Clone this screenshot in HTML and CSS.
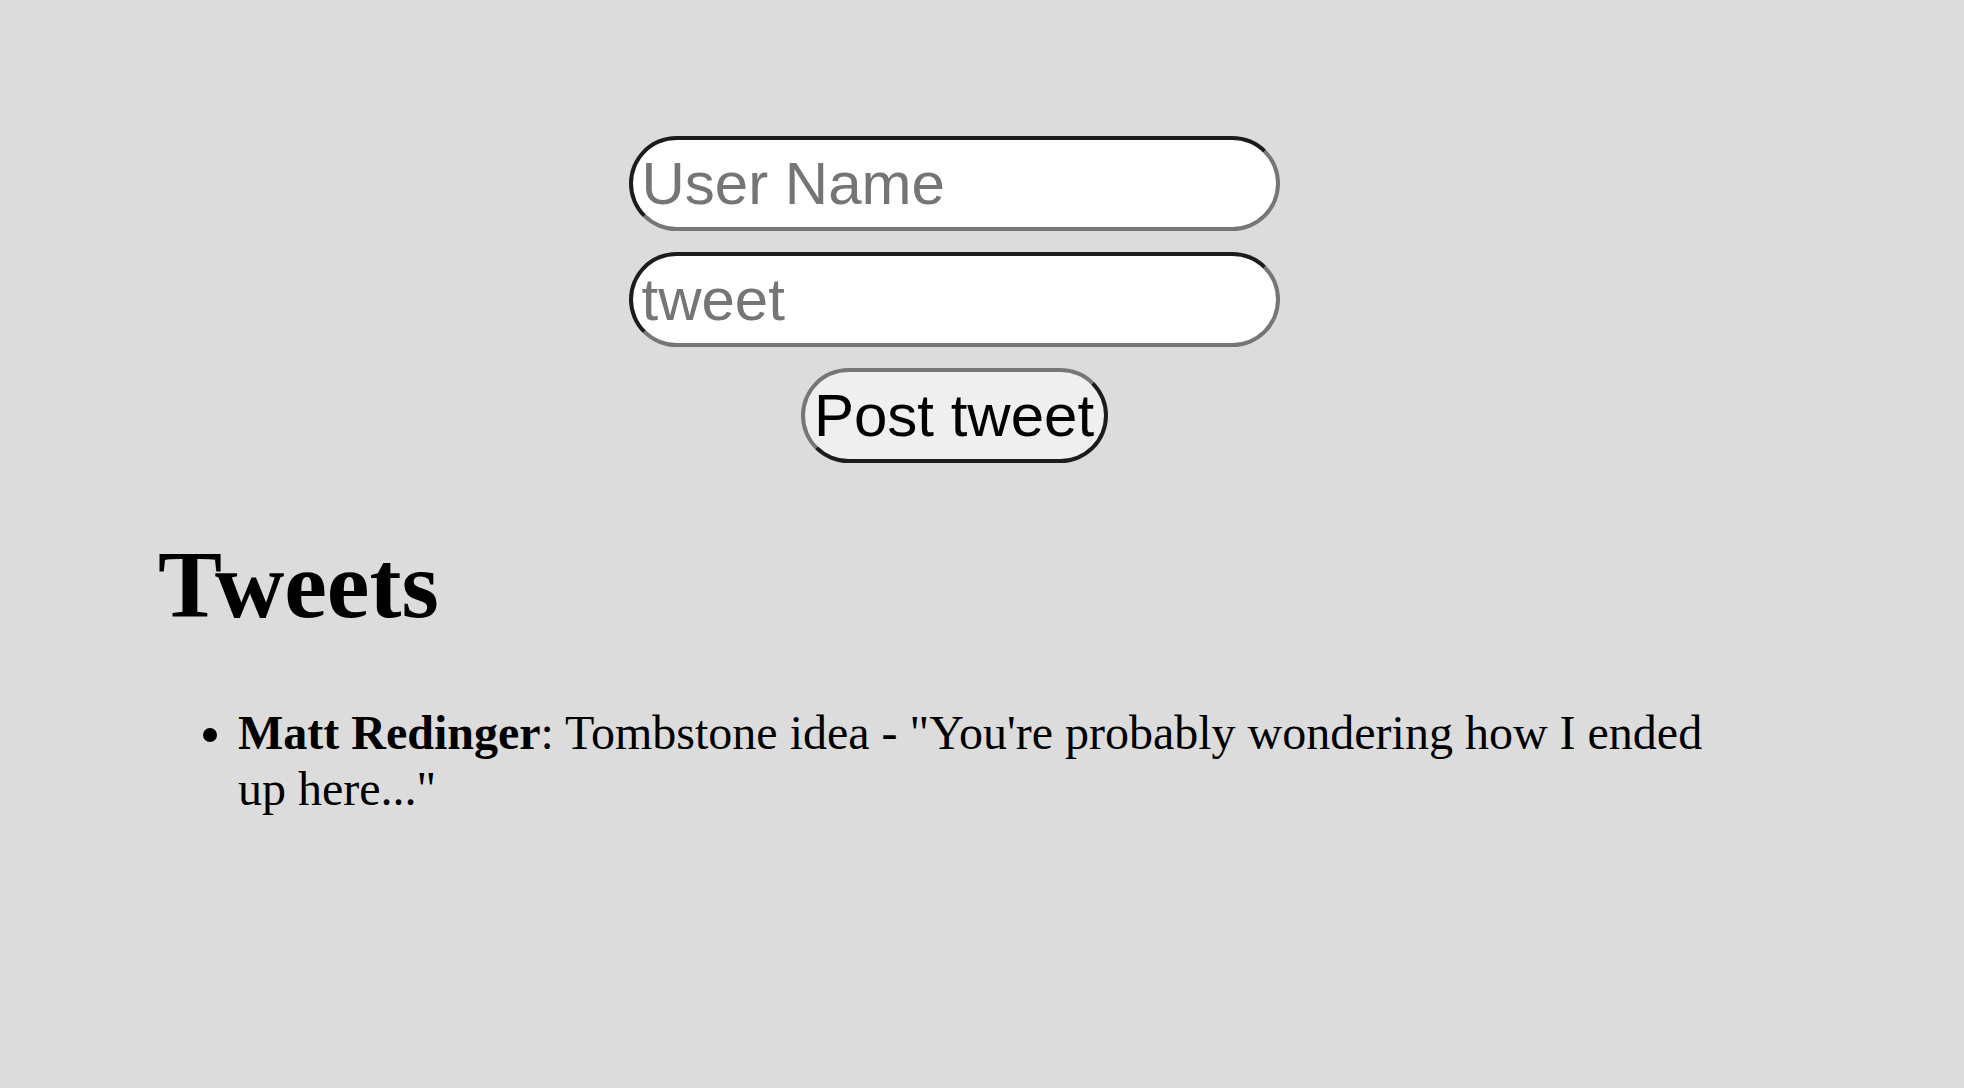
FILE: index.html
```html
<!DOCTYPE html>
<html lang="en">
<head>
<meta charset="utf-8">
<title>Tweets</title>
<link rel="stylesheet" href="styles.css">
</head>
<body>
<main class="page">
  <form class="composer">
    <input class="field" type="text" placeholder="User Name">
    <input class="field" type="text" placeholder="tweet">
    <button class="post" type="button">Post tweet</button>
  </form>
  <h1 class="title">Tweets</h1>
  <ul class="tweets">
    <li class="tweet"><b class="author">Matt Redinger</b>: Tombstone idea - "You're probably wondering how I ended up here..."</li>
  </ul>
</main>
</body>
</html>
```

FILE: styles.css
```css
html, body {
  margin: 0;
  padding: 0;
  background: #dcdcdc;
}

body {
  font-family: "Liberation Serif", "Times New Roman", serif;
  font-size: 48px;
  color: #000;
}

.page {
  margin-left: 158px;
  width: 1592px;
}

.composer {
  display: flex;
  flex-direction: column;
  align-items: center;
  gap: 21px;
  padding-top: 136px;
  margin: 0;
}

.field {
  box-sizing: border-box;
  width: 651px;
  height: 95px;
  margin: 0;
  padding: 0 9px;
  font-family: "Liberation Sans", Arial, sans-serif;
  font-size: 60px;
  color: #000;
  background: #fff;
  border-width: 4px;
  border-style: solid;
  border-color: #1c1c1c #767676 #767676 #1c1c1c;
  border-radius: 48px;
  outline: none;
}

.field::placeholder {
  color: #757575;
  opacity: 1;
}

.post {
  box-sizing: border-box;
  height: 95px;
  width: 307px;
  margin: 0;
  padding: 0;
  font-family: "Liberation Sans", Arial, sans-serif;
  font-size: 60px;
  color: #000;
  background: #efefef;
  border-width: 4px;
  border-style: solid;
  border-color: #767676 #1c1c1c #1c1c1c #767676;
  border-radius: 48px;
}

.title {
  margin: 67px 0 0 0;
  font-size: 96px;
  font-weight: bold;
  line-height: 110px;
}

.tweets {
  margin: 65px 0 0 0;
  padding-left: 80px;
}

.tweet {
  line-height: 56px;
}

.author {
  font-weight: bold;
}
```
